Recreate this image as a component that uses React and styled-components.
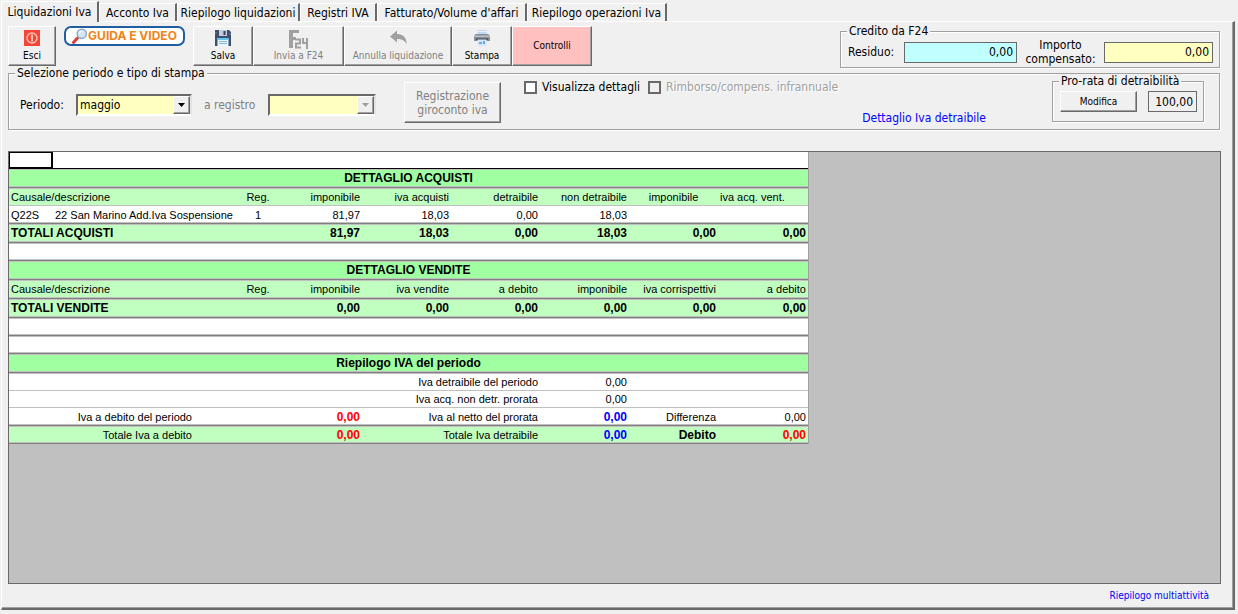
import React, { useState } from 'react';
import styled, { createGlobalStyle, css } from 'styled-components';

const GlobalStyle = createGlobalStyle`
    *{
        box-sizing: border-box;
    }
    body{
        margin: 0;
        background: #f0f0f0;
        color: #000;
        font: 12px/14px 'DejaVu Sans Condensed', 'DejaVu Sans', sans-serif;
    }
    button, input, select{
        font: inherit;
        color: inherit;
        border-radius: 0;
        margin: 0;
    }
`;

const raised = css`
    border: 1px solid;
    border-color: #fff #696969 #696969 #fff;
    box-shadow: inset -1px -1px #a0a0a0;
    background: #f0f0f0;
`;

const Page = styled.div`
    display: flex;
    flex-direction: column;
    min-height: 100vh;
    padding: 1px 3px 4px 1px;
`;

const TabBar = styled.div`
    display: flex;
    align-items: flex-end;
    height: 20px;
`;

const Tab = styled.button`
    flex: none;
    width: ${(props) => props.$width}px;
    height: ${(props) => (props.$active ? 21 : 18)}px;
    margin-bottom: ${(props) => (props.$active ? -1 : 0)}px;
    padding: 0;
    position: relative;
    border: solid;
    border-width: 1px 2px 0 1px;
    border-color: #fff #696969 #fff #fff;
    background: #f0f0f0;
    text-align: center;
    white-space: nowrap;
`;

const Panel = styled.main`
    flex: 1;
    display: flex;
    flex-direction: column;
    padding: 2px 12px 0 6px;
    border: solid;
    border-width: 1px 2px 2px 1px;
    border-color: #fff #696969 #696969 #fff;
    box-shadow: inset -1px -1px #a0a0a0;
`;

const Toolbar = styled.div`
    display: flex;
    align-items: flex-start;
    height: 42px;
    padding-right: 1px;
`;

const ToolButton = styled.button`
    ${raised}
    display: flex;
    flex-direction: column;
    align-items: center;
    justify-content: ${(props) => (props.$plain ? 'center' : 'space-between')};
    flex: none;
    width: ${(props) => props.$width}px;
    height: 40px;
    margin-top: 2px;
    padding: 3px 0;
    font-size: 10px;
    line-height: 12px;
    white-space: nowrap;
    ${(props) => props.$plain && 'background: #ffc0c0;'}
    &:disabled{
        color: #808080;
    }
    svg{
        display: block;
    }
`;

const GuideLink = styled.a`
    display: flex;
    align-items: center;
    justify-content: center;
    width: 121px;
    height: 20px;
    margin: 2px 8px 0;
    border: 2px solid #1f5fa0;
    border-radius: 7px;
    background: #fff;
    color: #f08418;
    font: 700 12px/16px Inter, sans-serif;
    text-decoration: none;
    white-space: nowrap;
`;

const Group = styled.fieldset`
    display: flex;
    min-width: 0;
    margin: 0;
    padding: 0;
    border: 1px solid #a0a0a0;
    box-shadow: 1px 1px #fff, inset 1px 1px #fff;
`;

const Legend = styled.legend`
    margin-left: 6px;
    padding: 0 2px;
    background: #f0f0f0;
    white-space: nowrap;
`;

const CreditGroup = styled(Group)`
    align-items: center;
    flex: none;
    width: 380px;
    margin: 0 0 0 auto;
    padding: 0 6px 1px 0;
    label{
        white-space: nowrap;
    }
    label:first-of-type{
        margin-left: 7px;
    }
`;

const TwoLineLabel = styled.label`
    flex: 1;
    text-align: center;
`;

const Amount = styled.input`
    width: ${(props) => props.$width}px;
    height: 21px;
    padding: 0 3px;
    border: 1px solid #696969;
    background: ${(props) => props.$color || '#f0f0f0'};
    text-align: right;
`;

const PeriodGroup = styled(Group)`
    align-items: flex-start;
    margin: 0 1px 21px 0;
    padding: 0 15px 0 0;
`;

const PeriodRow = styled.div`
    display: flex;
    align-items: center;
    flex: none;
    padding: 14px 0 0 11px;
`;

const PeriodLabel = styled.label`
    width: ${(props) => props.$width}px;
    white-space: nowrap;
    color: ${(props) => (props.$off ? '#808080' : '#000')};
`;

const SelectBox = styled.span`
    display: grid;
    width: ${(props) => props.$width}px;
    height: 22px;
    margin-right: 12px;
    border: 2px solid;
    border-color: #696969 #e3e3e3 #fff #696969;
    > *{
        grid-area: 1 / 1;
    }
    select{
        appearance: none;
        min-width: 0;
        padding: 0 2px;
        border: none;
        outline: none;
        background: #ffffc0;
        opacity: 1;
    }
`;

const Arrow = styled.span`
    ${raised}
    display: flex;
    align-items: center;
    justify-content: center;
    justify-self: end;
    width: 17px;
    color: ${(props) => (props.$off ? '#a0a0a0' : '#000')};
    pointer-events: none;
`;

const PostingButton = styled.button`
    ${raised}
    flex: none;
    width: 97px;
    height: 41px;
    margin: 2px 23px 0 16px;
    padding: 0;
    &:disabled{
        color: #808080;
    }
`;

const Options = styled.div`
    flex: 1;
    display: flex;
    flex-direction: column;
    justify-content: space-between;
    height: 49px;
    padding-bottom: 4px;
`;

const Checks = styled.div`
    display: flex;
    gap: 8px;
`;

const Check = styled.label`
    display: flex;
    align-items: center;
    gap: 5px;
    white-space: nowrap;
    ${(props) => props.$off && 'color: #a0a0a0; text-shadow: 1px 1px #fff;'}
    input{
        appearance: none;
        width: 13px;
        height: 13px;
        border: 2px solid #696969;
        background: ${(props) => (props.$off ? '#f0f0f0' : '#fff')};
    }
    input:checked{
        background: #696969;
    }
`;

const DetailLink = styled.a`
    align-self: flex-end;
    margin-right: 66px;
    color: #00f;
    text-decoration: none;
    white-space: nowrap;
`;

const ProRataGroup = styled(Group)`
    flex: none;
    gap: 11px;
    margin-top: -6px;
    padding: 3px 6px 9px 0;
`;

const EditButton = styled.button`
    ${raised}
    width: 77px;
    height: 21px;
    margin-left: 7px;
    padding: 0;
    font-size: 10px;
`;

const Sheet = styled.div`
    flex: 1;
    border: 1px solid #696969;
    background: #c0c0c0;
    overflow: auto;
`;

const Table = styled.table`
    width: 799px;
    table-layout: fixed;
    border-collapse: separate;
    border-spacing: 0;
    border-right: 1px solid #a0a0a0;
    font: 11px/13px 'Liberation Sans', Arial, sans-serif;
`;

const rowColors = { title: '#a0ffa0', head: '#c0ffc0', total: '#c0ffc0' };

const Row = styled.tr`
    height: ${(props) => props.$height}px;
    background: ${(props) => rowColors[props.$kind] || '#fff'};
    td, th{
        padding: 1px 2px 0;
        border-bottom: 1px solid ${(props) => (props.$thin ? '#c0c0c0' : '#808080')};
        box-shadow: ${(props) => (props.$thin ? 'inset 0 0' : 'inset 0 -1px')} #c0c0c0${(props) => (props.$under ? ', inset 0 1px #c0c0c0' : '')};
        font-weight: normal;
        white-space: nowrap;
    }
`;

const Cell = styled.td`
    &&{
        text-align: ${(props) => props.$align || 'right'};
        color: ${(props) => props.$color || '#000'};
        ${(props) => props.$bold && 'font-weight: bold; font-size: 12px;'}
    }
`;

const CursorRow = styled.tr`
    height: 17px;
    background: #fff;
    td{
        padding: 0;
        border-bottom: 1px solid #000;
    }
    td:first-child{
        border: solid #000;
        border-width: 1px 2px 2px 1px;
    }
`;

const Footer = styled.footer`
    display: flex;
    justify-content: flex-end;
    padding-right: 12px;
    font-size: 10px;
    line-height: 24px;
    a{
        color: #00f;
        text-decoration: none;
    }
`;

const tabs = [
    { title: 'Liquidazioni Iva', width: 98 },
    { title: 'Acconto Iva', width: 78 },
    { title: 'Riepilogo liquidazioni', width: 123 },
    { title: 'Registri IVA', width: 77 },
    { title: "Fatturato/Volume d'affari", width: 150 },
    { title: 'Riepilogo operazioni Iva', width: 140 },
];

const columns = [44, 141, 49, 30, 89, 89, 89, 89, 89, 90];

function PowerIcon(){
    return (
        <svg width="16" height="16" viewBox="0 0 16 16" fill="none">
            <path d="M0 0h16v16H0z" fill="#f8453a" />
            <circle cx="8" cy="8" r="5" stroke="#ffc9b8" strokeWidth="1.3" />
            <path d="M8 4.5v7" stroke="#ffe0d0" strokeWidth="1.6" />
        </svg>
    );
}

function LensIcon(){
    return (
        <svg width="16" height="16" viewBox="0 0 16 16" fill="none">
            <path d="M1.5 14.5l4-4.5" stroke="#e03c3c" strokeWidth="3" strokeLinecap="round" />
            <path d="M5 10.5l2-2" stroke="#777" strokeWidth="1.5" />
            <circle cx="9.8" cy="5.8" r="4.6" fill="#d3e6f6" stroke="#93a9c4" strokeWidth="1.5" />
            <path d="M7.3 5.5a2.8 2.8 0 0 1 2.5-2.3" stroke="#fff" strokeWidth="1.2" />
        </svg>
    );
}

function FloppyIcon(){
    return (
        <svg width="16" height="16" viewBox="0 0 16 16">
            <path d="M0 0h14l2 2v14H0z" fill="#40506c" />
            <path d="M4 0h8v6H4z" fill="#c3ccd8" />
            <path d="M8.500 1h2v4h-2z" fill="#34435e" />
            <path d="M2.500 8h11v8h-11z" fill="#e6f7ff" />
            <path d="M2.500 8h11v2h-11z" fill="#68c5f2" />
            <path d="M4 11.500h8M4 13.500h8" stroke="#8bb5cf" />
            <path d="M1 2v2M15 3v2" stroke="#7184a4" />
        </svg>
    );
}

function F24Icon(){
    return (
        <svg width="20" height="19" viewBox="0 0 20 19" fill="none" stroke="#a0a0a0">
            <path d="M0 1.500h10M0 8.500h7" strokeWidth="3" />
            <path d="M2 0v18" strokeWidth="4" />
            <path d="M6 9.500h5v4H7v4h5" strokeWidth="2" />
            <path d="M14 8v5h5M18 8v11" strokeWidth="2" />
        </svg>
    );
}

function UndoIcon(){
    return (
        <svg width="17" height="16" viewBox="0 0 17 16">
            <path d="M0 6.500L7 .500V4c6 0 10 3.500 9.500 10.500C15 10.500 12 9 7 9V12.500z" fill="#a0a0a0" />
        </svg>
    );
}

function PrinterIcon(){
    return (
        <svg width="16" height="16" viewBox="0 0 16 16">
            <path d="M3.500 0h9v5h-9z" fill="#bfd9f4" />
            <path d="M4 1h8v1H4z" fill="#e6f2fd" />
            <path d="M0 5.500L2 4h12l2 1.500V11H0z" fill="#888e98" />
            <path d="M0 5.500h16V7H0z" fill="#bcc1c8" />
            <path d="M2 8.500h12V10H2z" fill="#454b56" />
            <path d="M3.500 9.500h9V16h-9z" fill="#d5e8fa" />
            <path d="M5 12h3v2H5zM9 11h2v3H9z" fill="#6aa7e6" />
        </svg>
    );
}

function Triangle(){
    return (
        <svg width="7" height="4" viewBox="0 0 7 4">
            <path d="M0 0h7L3.500 4z" fill="currentColor" />
        </svg>
    );
}

function TotalRow({ title, values }){
    return (
        <Row $kind="total" $height={19} $under>
            <Cell colSpan={4} $align="left" $bold>{title}</Cell>
            {values.map((value, i) => (
                <Cell key={i} $bold>{value}</Cell>
            ))}
        </Row>
    );
}

function TitleRow({ children }){
    return (
        <Row $kind="title" $height={19} $under>
            <Cell as="th" colSpan={10} $align="center" $bold>{children}</Cell>
        </Row>
    );
}

function EmptyRow(){
    return (
        <Row $height={18} $under>
            <td colSpan={10} />
        </Row>
    );
}

function HeadRow({ titles, aligns = [], thin }){
    return (
        <Row $kind="head" $height={thin ? 18 : 19} $thin={thin} $under>
            <Cell as="th" colSpan={3} $align="left">Causale/descrizione</Cell>
            <Cell as="th" $align="center">Reg.</Cell>
            {titles.map((title, i) => (
                <Cell as="th" key={i} $align={aligns[i]}>{title}</Cell>
            ))}
        </Row>
    );
}

function VatTable(){
    return (
        <Table>
            <colgroup>
                {columns.map((width, i) => (
                    <col key={i} width={width} />
                ))}
            </colgroup>
            <tbody>
                <CursorRow>
                    <td />
                    <td colSpan={9} />
                </CursorRow>
                <TitleRow>DETTAGLIO ACQUISTI</TitleRow>
                <HeadRow
                    thin
                    titles={['imponibile', 'iva acquisti', 'detraibile', 'non detraibile', 'imponibile', 'iva acq. vent.']}
                    aligns={['right', 'right', 'right', 'right', 'center', 'left']}
                />
                <Row $height={18}>
                    <Cell $align="left">Q22S</Cell>
                    <Cell colSpan={2} $align="left">22 San Marino Add.Iva Sospensione</Cell>
                    <Cell $align="center">1</Cell>
                    <Cell>81,97</Cell>
                    <Cell>18,03</Cell>
                    <Cell>0,00</Cell>
                    <Cell>18,03</Cell>
                    <Cell colSpan={2} />
                </Row>
                <TotalRow title="TOTALI ACQUISTI" values={['81,97', '18,03', '0,00', '18,03', '0,00', '0,00']} />
                <EmptyRow />
                <TitleRow>DETTAGLIO VENDITE</TitleRow>
                <HeadRow titles={['imponibile', 'iva vendite', 'a debito', 'imponibile', 'iva corrispettivi', 'a debito']} />
                <TotalRow title="TOTALI VENDITE" values={['0,00', '0,00', '0,00', '0,00', '0,00', '0,00']} />
                <EmptyRow />
                <EmptyRow />
                <TitleRow>Riepilogo IVA del periodo</TitleRow>
                <Row $height={18} $thin $under>
                    <Cell colSpan={7}>Iva detraibile del periodo</Cell>
                    <Cell>0,00</Cell>
                    <Cell colSpan={2} />
                </Row>
                <Row $height={17} $thin>
                    <Cell colSpan={7}>Iva acq. non detr. prorata</Cell>
                    <Cell>0,00</Cell>
                    <Cell colSpan={2} />
                </Row>
                <Row $height={18}>
                    <Cell colSpan={2}>Iva a debito del periodo</Cell>
                    <Cell colSpan={3} $bold $color="#f00">0,00</Cell>
                    <Cell colSpan={2}>Iva al netto del prorata</Cell>
                    <Cell $bold $color="#00f">0,00</Cell>
                    <Cell>Differenza</Cell>
                    <Cell>0,00</Cell>
                </Row>
                <Row $kind="total" $height={18} $under>
                    <Cell colSpan={2}>Totale Iva a debito</Cell>
                    <Cell colSpan={3} $bold $color="#f00">0,00</Cell>
                    <Cell colSpan={2}>Totale Iva detraibile</Cell>
                    <Cell $bold $color="#00f">0,00</Cell>
                    <Cell $bold>Debito</Cell>
                    <Cell $bold $color="#f00">0,00</Cell>
                </Row>
            </tbody>
        </Table>
    );
}

function App(){
    const [activeTab, setActiveTab] = useState(0);
    const [month, setMonth] = useState('maggio');
    return (
        <Page>
            <GlobalStyle />
            <TabBar role="tablist">
                {tabs.map((tab, i) => (
                    <Tab
                        key={tab.title}
                        type="button"
                        role="tab"
                        aria-selected={i === activeTab}
                        $active={i === activeTab}
                        $width={tab.width}
                        onClick={() => setActiveTab(i)}
                    >
                        {tab.title}
                    </Tab>
                ))}
            </TabBar>
            <Panel>
                <Toolbar>
                    <ToolButton type="button" $width={48}><PowerIcon />Esci</ToolButton>
                    <GuideLink href="#guida"><LensIcon />GUIDA E VIDEO</GuideLink>
                    <ToolButton type="button" $width={60}><FloppyIcon />Salva</ToolButton>
                    <ToolButton type="button" $width={91} disabled><F24Icon />Invia a F24</ToolButton>
                    <ToolButton type="button" $width={108} disabled><UndoIcon />Annulla liquidazione</ToolButton>
                    <ToolButton type="button" $width={60}><PrinterIcon />Stampa</ToolButton>
                    <ToolButton type="button" $width={80} $plain>Controlli</ToolButton>
                    <CreditGroup>
                        <Legend>Credito da F24</Legend>
                        <PeriodLabel htmlFor="residuo" $width={56}>Residuo:</PeriodLabel>
                        <Amount id="residuo" $width={113} $color="#c0ffff" defaultValue="0,00" />
                        <TwoLineLabel htmlFor="importo">Importo<br />compensato:</TwoLineLabel>
                        <Amount id="importo" $width={109} $color="#ffffc0" defaultValue="0,00" />
                    </CreditGroup>
                </Toolbar>
                <PeriodGroup>
                    <Legend>Selezione periodo e tipo di stampa</Legend>
                    <PeriodRow>
                        <PeriodLabel htmlFor="periodo" $width={56}>Periodo:</PeriodLabel>
                        <SelectBox $width={116}>
                            <select id="periodo" value={month} onChange={(e) => setMonth(e.target.value)}>
                                <option>maggio</option>
                            </select>
                            <Arrow><Triangle /></Arrow>
                        </SelectBox>
                        <PeriodLabel htmlFor="registro" $width={64} $off>a registro</PeriodLabel>
                        <SelectBox $width={108}>
                            <select id="registro" disabled />
                            <Arrow $off><Triangle /></Arrow>
                        </SelectBox>
                    </PeriodRow>
                    <PostingButton type="button" disabled>Registrazione<br />giroconto iva</PostingButton>
                    <Options>
                        <Checks>
                            <Check><input type="checkbox" />Visualizza dettagli</Check>
                            <Check $off><input type="checkbox" disabled />Rimborso/compens. infrannuale</Check>
                        </Checks>
                        <DetailLink href="#dettaglio">Dettaglio Iva detraibile</DetailLink>
                    </Options>
                    <ProRataGroup>
                        <Legend>Pro-rata di detraibilità</Legend>
                        <EditButton type="button">Modifica</EditButton>
                        <Amount $width={49} defaultValue="100,00" aria-label="Pro-rata di detraibilità" />
                    </ProRataGroup>
                </PeriodGroup>
                <Sheet>
                    <VatTable />
                </Sheet>
                <Footer>
                    <a href="#multiattivita">Riepilogo multiattività</a>
                </Footer>
            </Panel>
        </Page>
    );
}

export default App;
